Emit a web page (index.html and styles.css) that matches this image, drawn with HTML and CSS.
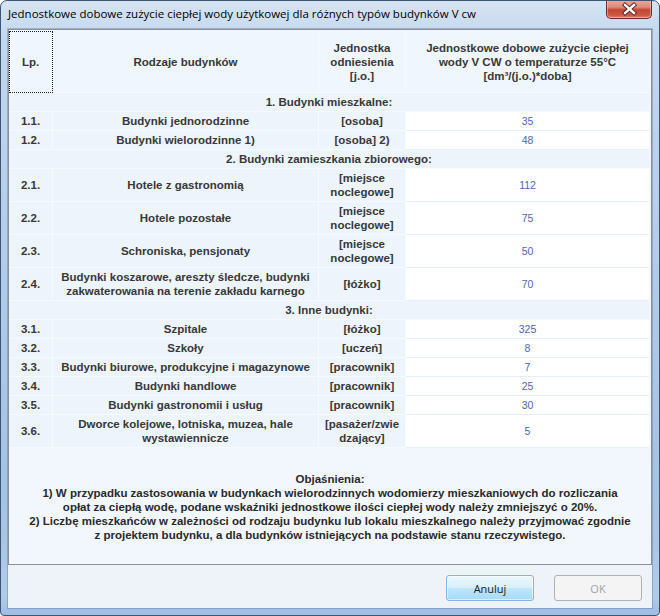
FILE: index.html
```html
<!DOCTYPE html>
<html lang="pl">
<head>
<meta charset="utf-8">
<title>Jednostkowe dobowe zużycie ciepłej wody</title>
<link rel="stylesheet" href="styles.css">
</head>
<body>
<div class="window">
  <div class="titlebar">
    <span class="title">Jednostkowe dobowe zużycie ciepłej wody użytkowej dla różnych typów budynków V cw</span>
    <button class="close" aria-label="Zamknij">
      <svg width="44" height="18" viewBox="0 0 44 18">
        <path d="M18 5 L27 13 M27 5 L18 13" stroke="#4a1f1a" stroke-width="4.2" stroke-linecap="square" fill="none"/>
        <path d="M18 5 L27 13 M27 5 L18 13" stroke="#ffffff" stroke-width="2.4" stroke-linecap="square" fill="none"/>
      </svg>
    </button>
  </div>
  <div class="client">
    <div class="panel">
      <table class="grid">
        <colgroup>
          <col class="c-lp"><col class="c-name"><col class="c-unit"><col class="c-val">
        </colgroup>
        <thead>
          <tr class="head">
            <th class="lp focus">Lp.</th>
            <th>Rodzaje budynków</th>
            <th>Jednostka<br>odniesienia<br>[j.o.]</th>
            <th>Jednostkowe dobowe zużycie ciepłej<br>wody V CW o temperaturze 55°C<br>[dm³/(j.o.)*doba]</th>
          </tr>
        </thead>
        <tbody>
          <tr class="section"><td colspan="4">1. Budynki mieszkalne:</td></tr>
          <tr><td>1.1.</td><td>Budynki jednorodzinne</td><td>[osoba]</td><td class="val">35</td></tr>
          <tr><td>1.2.</td><td>Budynki wielorodzinne 1)</td><td>[osoba] 2)</td><td class="val">48</td></tr>
          <tr class="section"><td colspan="4">2. Budynki zamieszkania zbiorowego:</td></tr>
          <tr><td>2.1.</td><td>Hotele z gastronomią</td><td>[miejsce<br>noclegowe]</td><td class="val">112</td></tr>
          <tr><td>2.2.</td><td>Hotele pozostałe</td><td>[miejsce<br>noclegowe]</td><td class="val">75</td></tr>
          <tr><td>2.3.</td><td>Schroniska, pensjonaty</td><td>[miejsce<br>noclegowe]</td><td class="val">50</td></tr>
          <tr><td>2.4.</td><td>Budynki koszarowe, areszty śledcze, budynki<br>zakwaterowania na terenie zakładu karnego</td><td>[łóżko]</td><td class="val">70</td></tr>
          <tr class="section"><td colspan="4">3. Inne budynki:</td></tr>
          <tr><td>3.1.</td><td>Szpitale</td><td>[łóżko]</td><td class="val">325</td></tr>
          <tr><td>3.2.</td><td>Szkoły</td><td>[uczeń]</td><td class="val">8</td></tr>
          <tr><td>3.3.</td><td>Budynki biurowe, produkcyjne i magazynowe</td><td>[pracownik]</td><td class="val">7</td></tr>
          <tr><td>3.4.</td><td>Budynki handlowe</td><td>[pracownik]</td><td class="val">25</td></tr>
          <tr><td>3.5.</td><td>Budynki gastronomii i usług</td><td>[pracownik]</td><td class="val">30</td></tr>
          <tr><td>3.6.</td><td>Dworce kolejowe, lotniska, muzea, hale<br>wystawiennicze</td><td>[pasażer/zwie<br>dzający]</td><td class="val">5</td></tr>
        </tbody>
      </table>
      <div class="notes">
        Objaśnienia:<br>
        1) W przypadku zastosowania w budynkach wielorodzinnych wodomierzy mieszkaniowych do rozliczania<br>
        opłat za ciepłą wodę, podane wskaźniki jednostkowe ilości ciepłej wody należy zmniejszyć o 20%.<br>
        2) Liczbę mieszkańców w zależności od rodzaju budynku lub lokalu mieszkalnego należy przyjmować zgodnie<br>
        z projektem budynku, a dla budynków istniejących na podstawie stanu rzeczywistego.
      </div>
    </div>
    <div class="buttons">
      <button class="btn btn-default">Anuluj</button>
      <button class="btn" disabled>OK</button>
    </div>
  </div>
</div>
</body>
</html>
```

FILE: styles.css
```css
html, body {
  margin: 0;
  padding: 0;
  background: #ffffff;
}

.window {
  width: 660px;
  height: 616px;
  box-sizing: border-box;
  border: 1px solid #3d5573;
  border-radius: 7px 7px 4px 4px;
  overflow: hidden;
  background: linear-gradient(to bottom, #d6e4f3 0%, #c3d7ee 6%, #b3cdea 40%, #a3c2e5 80%, #b1cbea 97%, #9ebde2 100%);
  display: flex;
  flex-direction: column;
}

.titlebar {
  height: 28px;
  flex: none;
  display: flex;
  justify-content: space-between;
  align-items: flex-start;
}

.title {
  font-family: "Open Sans", "Noto Sans", sans-serif;
  font-size: 11.5px;
  color: #000;
  padding: 5px 0 0 7px;
  line-height: 16px;
  white-space: nowrap;
}

.close {
  width: 46px;
  height: 19px;
  margin: -1px 7px 0 0;
  padding: 0;
  border: 1px solid #6b2a22;
  border-top: none;
  border-radius: 0 0 5px 5px;
  background: linear-gradient(to bottom, #e9ab9d 0%, #dc8a78 40%, #c6442f 55%, #c95a45 85%, #d98a72 100%);
  box-shadow: inset 0 0 0 1px rgba(255, 220, 210, 0.45);
  display: flex;
  align-items: center;
  justify-content: center;
}

.close svg {
  display: block;
}

.client {
  flex: 1;
  margin: 0 7px 7px 7px;
  background: #eef3fa;
  display: flex;
  flex-direction: column;
  box-shadow: 0 0 0 1px rgba(70, 100, 140, 0.35);
}

.panel {
  height: 536px;
  box-sizing: border-box;
  border: 1px solid #8c9096;
  background: #f2f7fd;
  flex: none;
}

.grid {
  width: 640px;
  margin-top: 1px;
  table-layout: fixed;
  border-collapse: separate;
  border-spacing: 0;
  font-family: "Liberation Sans", Arial, sans-serif;
  font-size: 11.5px;
  font-weight: bold;
  color: #383838;
}

.c-lp { width: 44px; }
.c-name { width: 266px; }
.c-unit { width: 87px; }
.c-val { width: 243px; }

.grid th,
.grid td {
  background: #edf4fc;
  text-align: center;
  vertical-align: middle;
  padding: 2px 2px;
  line-height: 14px;
  border-right: 1px solid #f8fbfe;
  border-bottom: 1px solid #f8fbfe;
}

.grid .head th {
  padding: 10px 2px 9px;
  font-weight: bold;
  background: #f0f6fd;
}

.grid .head th:last-child {
  border-right: none;
}

.grid .focus {
  outline: 1px dotted #1e1e1e;
  outline-offset: -1px;
}

.grid .section td {
  border-right: none;
}

.grid td.val {
  background: #ffffff;
  border-right: none;
  border-bottom: 1px solid #e8eef5;
  font-weight: normal;
  font-size: 10.5px;
  color: #4d67b3;
}

.notes {
  margin-top: 24px;
  text-align: center;
  font-family: "Liberation Sans", Arial, sans-serif;
  font-size: 11.5px;
  font-weight: bold;
  line-height: 14px;
  color: #2a2a2a;
}

.buttons {
  flex: 1;
  display: flex;
  justify-content: flex-end;
  align-items: flex-start;
  gap: 20px;
  padding: 10px 10px 0 0;
}

.btn {
  width: 88px;
  height: 26px;
  box-sizing: border-box;
  border: 1px solid #adb2b5;
  border-radius: 3px;
  background: #f4f4f4;
  font-family: "Open Sans", "Noto Sans", sans-serif;
  font-size: 11px;
  color: #a3a3a3;
  padding: 0;
}

.btn-default {
  border-color: #7eb4ea;
  background: linear-gradient(to bottom, #eaf6fd 0%, #d9f0fc 48%, #bee6fd 52%, #a7d9f5 100%);
  box-shadow: inset 0 0 0 1px rgba(255, 255, 255, 0.6);
  color: #1b1b1b;
}
```
